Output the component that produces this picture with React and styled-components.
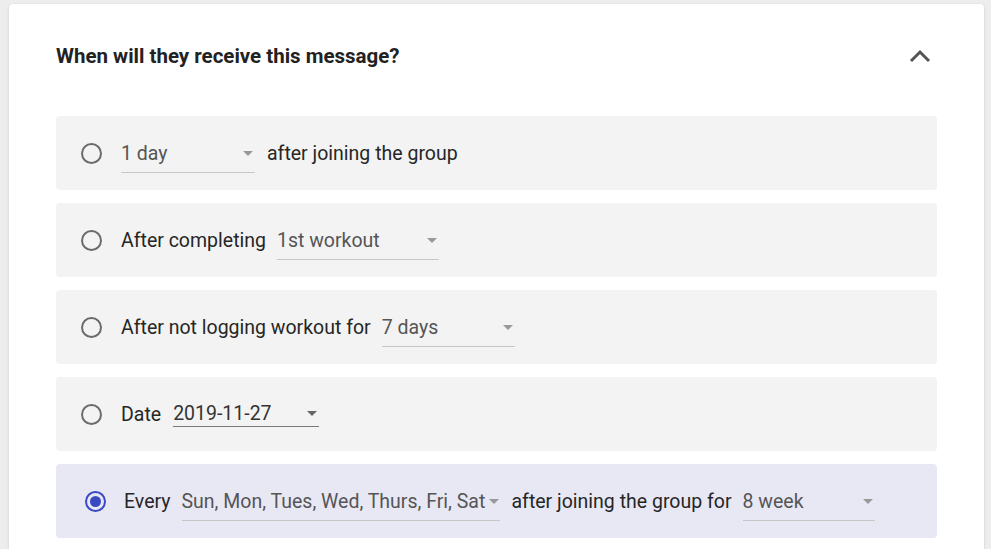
import React, { useState } from 'react';
import styled, { createGlobalStyle } from 'styled-components';

const GlobalStyle = createGlobalStyle`
  * {
    margin: 0;
    padding: 0;
    box-sizing: border-box;
  }

  body {
    font-family: Roboto, 'Liberation Sans', sans-serif;
    background: #ededed;
    color: #222;
    overflow: hidden;
  }
`;

const Card = styled.section`
  margin: 4px 0 0 9px;
  width: 975px;
  min-height: 560px;
  background: #fff;
  border-radius: 4px;
  box-shadow: 0 1px 3px rgba(0, 0, 0, 0.14);
  padding: 36px 47px 47px;
`;

const Header = styled.header`
  display: flex;
  align-items: center;
  justify-content: space-between;
  height: 32px;
  margin-bottom: 44px;

  h2 {
    font-size: 20.5px;
    font-weight: 700;
    color: #222;
  }
`;

const Collapse = styled.button`
  background: none;
  border: none;
  width: 22px;
  height: 14px;
  margin-right: 6px;
  cursor: pointer;
  display: flex;
  align-items: center;
  justify-content: center;
`;

const Options = styled.div`
  display: flex;
  flex-direction: column;
  gap: 13px;
`;

const Row = styled.label`
  display: flex;
  align-items: center;
  height: 74px;
  padding-left: ${p => (p.$active ? 29 : 25)}px;
  background: ${p => (p.$active ? '#e8e8f5' : '#f3f3f3')};
  border-radius: 4px;
  font-size: 19.5px;
  color: #262626;
  cursor: pointer;
`;

const Radio = styled.span`
  width: 21px;
  height: 21px;
  border-radius: 50%;
  border: 2px solid ${p => (p.$checked ? '#3949c4' : '#6b6b6b')};
  display: flex;
  align-items: center;
  justify-content: center;
  margin-right: ${p => (p.$checked ? 18 : 19)}px;
  flex-shrink: 0;

  &::after {
    content: '';
    width: 11px;
    height: 11px;
    border-radius: 50%;
    background: #3949c4;
    display: ${p => (p.$checked ? 'block' : 'none')};
  }
`;

const Text = styled.span`
  white-space: nowrap;
`;

const Select = styled.span`
  display: inline-flex;
  align-items: center;
  justify-content: space-between;
  width: ${p => p.$width}px;
  height: ${p => (p.$dense ? 26 : 40)}px;
  margin: ${p => (p.$dense ? '0 0 0 12px' : '0 12px 0 11px')};
  border-bottom: 1px solid ${p => (p.$dense ? '#7a7a7a' : '#c6c6c6')};
  color: ${p => (p.$dense ? '#333' : '#555')};
  white-space: nowrap;
  padding-top: ${p => (p.$dense ? 0 : 1)}px;
  flex-shrink: 0;

  &::after {
    content: '';
    width: 0;
    height: 0;
    margin-left: 4px;
    margin-right: 2px;
    border-left: 5px solid transparent;
    border-right: 5px solid transparent;
    border-top: 5px solid ${p => (p.$dense ? '#666' : '#999')};
  }
`;

const LeadSelect = styled(Select)`
  margin-left: 0;
`;

function Chevron() {
  return (
    <svg width="22" height="14" viewBox="0 0 22 14">
      <polyline points="2,12 11,3 20,12" fill="none" stroke="#555" strokeWidth="3" />
    </svg>
  );
}

export default function App() {
  const [choice, setChoice] = useState(4);

  return (
    <>
      <GlobalStyle />
      <Card>
        <Header>
          <h2>When will they receive this message?</h2>
          <Collapse aria-label="Collapse">
            <Chevron />
          </Collapse>
        </Header>

        <Options>
          <Row $active={choice === 0} onClick={() => setChoice(0)}>
            <Radio $checked={choice === 0} />
            <LeadSelect $width={134}>1 day</LeadSelect>
            <Text>after joining the group</Text>
          </Row>

          <Row $active={choice === 1} onClick={() => setChoice(1)}>
            <Radio $checked={choice === 1} />
            <Text>After completing</Text>
            <Select $width={162}>1st workout</Select>
          </Row>

          <Row $active={choice === 2} onClick={() => setChoice(2)}>
            <Radio $checked={choice === 2} />
            <Text>After not logging workout for</Text>
            <Select $width={133}>7 days</Select>
          </Row>

          <Row $active={choice === 3} onClick={() => setChoice(3)}>
            <Radio $checked={choice === 3} />
            <Text>Date</Text>
            <Select $width={146} $dense>2019-11-27</Select>
          </Row>

          <Row $active={choice === 4} onClick={() => setChoice(4)}>
            <Radio $checked={choice === 4} />
            <Text>Every</Text>
            <Select $width={318}>Sun, Mon, Tues, Wed, Thurs, Fri, Sat</Select>
            <Text>after joining the group for</Text>
            <Select $width={132}>8 week</Select>
          </Row>
        </Options>
      </Card>
    </>
  );
}
